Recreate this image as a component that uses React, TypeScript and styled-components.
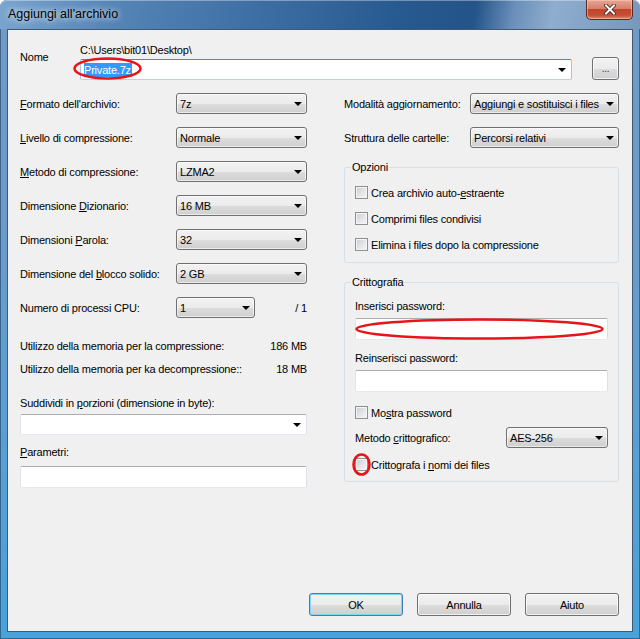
import React from 'react'
import styled, { createGlobalStyle } from 'styled-components'

const GlobalStyle = createGlobalStyle`
  html, body {
    margin: 0;
    padding: 0;
    background: #ffffff;
  }
  body {
    font-family: 'Liberation Sans', Arial, sans-serif;
    font-size: 11px;
    letter-spacing: -0.2px;
    color: #000;
  }
`

const Window = styled.div`
  width: 640px;
  height: 639px;
  box-sizing: border-box;
  display: flex;
  flex-direction: column;
  padding: 0 7px 7px 7px;
  border-radius: 7px 7px 0 0;
  background: linear-gradient(180deg, #6f9bc6 0%, #6a9bcb 35%, #55a0d4 80%, #48a3da 100%);
  box-shadow: inset 0 0 0 1px rgba(30, 55, 85, 0.55);
`

const TitleBar = styled.div`
  height: 29px;
  margin: 0 -7px;
  padding: 0 7px 0 8px;
  display: flex;
  align-items: flex-start;
  border-radius: 7px 7px 0 0;
  background: linear-gradient(100deg, #7aa5cf 0%, #5584b6 18%, #3e6fa4 40%, #275a90 62%, #245489 74%, #6a8fba 80%, #8fadcd 86%, #7797bc 100%);
  box-shadow: inset 0 1px 0 rgba(255, 255, 255, 0.35);
`

const Title = styled.div`
  font-size: 12.5px;
  letter-spacing: 0;
  line-height: 29px;
  color: #000;
  text-shadow: 0 0 6px rgba(255, 255, 255, 0.8), 0 0 10px rgba(255, 255, 255, 0.6);
`

const CloseButton = styled.div`
  margin-left: auto;
  width: 47px;
  height: 20px;
  box-sizing: border-box;
  border: 1px solid #5a2a22;
  border-top: none;
  border-radius: 0 0 5px 5px;
  background: linear-gradient(180deg, #e9a594 0%, #d5806a 45%, #c2452c 50%, #c74d33 80%, #dd8a6c 100%);
  box-shadow: inset 0 0 0 1px rgba(255, 210, 195, 0.5);
  display: flex;
  align-items: center;
  justify-content: center;
`

const Client = styled.div`
  flex: 1;
  display: flex;
  flex-direction: column;
  border: 1px solid #44586e;
  background: #f0f0f0;
  padding: 13px 13px 15px 12px;
`

const NameBlock = styled.div`
  display: grid;
  grid-template-columns: 60px 1fr;
`

const NameLabel = styled.div`
  grid-row: 1 / 3;
  line-height: 14px;
  margin-top: 7px;
`

const PathText = styled.div`
  line-height: 14px;
`

const NameRow = styled.div`
  display: flex;
  align-items: flex-end;
  gap: 20px;
`

const EditCombo = styled.div<{ $focused?: boolean; $width?: number }>`
  position: relative;
  flex: ${p => (p.$width ? 'none' : '1')};
  width: ${p => (p.$width ? `${p.$width}px` : 'auto')};
  height: 21px;
  box-sizing: border-box;
  display: flex;
  align-items: center;
  padding: 0 5px 0 3px;
  background: #fff;
  border: 1px solid;
  border-radius: 2px;
  border-color: ${p =>
    p.$focused ? '#5687b8 #a4c3e0 #b8d3ea #a4c3e0' : '#abadb3 #dbdfe6 #e3e9ef #e2e3ea'};
`

const Selected = styled.span`
  background: #3399ff;
  color: #fff;
  line-height: 14px;
  padding: 0 1px 0 0;
`

const Arrow = styled.span`
  margin-left: auto;
  width: 0;
  height: 0;
  border-left: 4px solid transparent;
  border-right: 4px solid transparent;
  border-top: 4px solid #000;
  flex: none;
`

const SmallButton = styled.div`
  width: 27px;
  height: 23px;
  box-sizing: border-box;
  border: 1px solid #707070;
  border-radius: 3px;
  background: linear-gradient(180deg, #f2f2f2 0%, #ebebeb 50%, #dddddd 51%, #cfcfcf 100%);
  box-shadow: inset 0 0 0 1px rgba(255, 255, 255, 0.7);
  display: flex;
  align-items: center;
  justify-content: center;
  font-size: 10px;
  padding-bottom: 1px;
  color: #333;
`

const Columns = styled.div`
  margin-top: 13px;
  display: grid;
  grid-template-columns: 287px 275px;
  column-gap: 37px;
  align-items: start;
`

const Column = styled.div`
  display: flex;
  flex-direction: column;
`

const SettingsList = styled.div`
  display: flex;
  flex-direction: column;
  gap: 13px;
`

const FieldRow = styled.div<{ $labelWidth: number }>`
  display: flex;
  align-items: center;
  height: 21px;

  & > label {
    width: ${p => p.$labelWidth}px;
    flex: none;
  }
`

const Select = styled.div<{ $width: number }>`
  width: ${p => p.$width}px;
  height: 21px;
  box-sizing: border-box;
  display: flex;
  align-items: center;
  padding: 0 4px 0 3px;
  border: 1px solid #707070;
  border-radius: 3px;
  background: linear-gradient(180deg, #f2f2f2 0%, #ebebeb 50%, #dddddd 51%, #cfcfcf 100%);
  box-shadow: inset 0 0 0 1px rgba(255, 255, 255, 0.6);
  white-space: nowrap;
  flex: none;
`

const CpuTotal = styled.span`
  margin-left: auto;
`

const InfoRow = styled.div<{ $gap: number }>`
  display: flex;
  justify-content: space-between;
  line-height: 14px;
  margin-top: ${p => p.$gap}px;
`

const TextLine = styled.div<{ $gap: number }>`
  line-height: 14px;
  margin-top: ${p => p.$gap}px;
`

const TextBox = styled.div<{ $gap: number; $height?: number }>`
  position: relative;
  margin-top: ${p => p.$gap}px;
  height: ${p => p.$height ?? 21}px;
  box-sizing: border-box;
  display: flex;
  align-items: center;
  padding: 0 5px 0 3px;
  background: #fff;
  border: 1px solid;
  border-radius: 2px;
  border-color: #abadb3 #dbdfe6 #e3e9ef #e2e3ea;
`

const Group = styled.fieldset<{ $gap: number; $padTop: number; $padBottom: number }>`
  margin: ${p => p.$gap}px 0 0 0;
  padding: ${p => p.$padTop}px 10px ${p => p.$padBottom}px 10px;
  border: 1px solid #d5dfe5;
  border-radius: 3px;
  min-width: 0;
  display: flex;
  flex-direction: column;
`

const Legend = styled.legend`
  margin-left: -4px;
  padding: 0 1px;
  line-height: 14px;
`

const CheckRow = styled.div<{ $gap?: number }>`
  display: flex;
  align-items: center;
  height: 13px;
  margin-top: ${p => p.$gap ?? 0}px;
`

const Box = styled.span`
  position: relative;
  width: 13px;
  height: 13px;
  box-sizing: border-box;
  border: 1px solid #8e8f8f;
  background: linear-gradient(135deg, #c9ccd1 0%, #e4e6e8 55%, #f4f4f4 100%);
  box-shadow: inset 0 0 0 1px #f4f4f4;
  flex: none;
`

const CheckText = styled.span`
  margin-left: 3px;
  line-height: 14px;
`

const MethodRow = styled.div`
  display: flex;
  align-items: center;
  justify-content: space-between;
  height: 21px;
  margin-top: 8px;
`

const Key = styled.span`
  text-decoration: underline;
`

const ButtonRow = styled.div`
  margin-top: auto;
  display: flex;
  justify-content: flex-end;
  gap: 14px;
`

const DialogButton = styled.div<{ $default?: boolean }>`
  width: 94px;
  height: 23px;
  box-sizing: border-box;
  display: flex;
  align-items: center;
  justify-content: center;
  border: 1px solid ${p => (p.$default ? '#3c7fb1' : '#707070')};
  border-radius: 3px;
  background: linear-gradient(180deg, #f2f2f2 0%, #ebebeb 50%, #dddddd 51%, #cfcfcf 100%);
  box-shadow: ${p =>
    p.$default ? 'inset 0 0 0 1px #7fd6f5' : 'inset 0 0 0 1px rgba(255, 255, 255, 0.7)'};
`

const Mark = styled.svg<{ $x: number; $y: number }>`
  position: absolute;
  left: ${p => p.$x}px;
  top: ${p => p.$y}px;
  overflow: visible;
  pointer-events: none;
`

function RedEllipse({ x, y, w, h }: { x: number; y: number; w: number; h: number }) {
  return (
    <Mark $x={x} $y={y} width={w} height={h}>
      <ellipse cx={w / 2} cy={h / 2} rx={w / 2 - 1.5} ry={h / 2 - 1.5} fill="none" stroke="#e8141c" strokeWidth="2.6" />
    </Mark>
  )
}

function Check({ children, gap, marked }: { children: React.ReactNode; gap?: number; marked?: boolean }) {
  return (
    <CheckRow $gap={gap}>
      <Box>{marked && <RedEllipse x={-4} y={-6} w={19} h={23} />}</Box>
      <CheckText>{children}</CheckText>
    </CheckRow>
  )
}

const settings: { label: React.ReactNode; value: string; width?: number }[] = [
  { label: <><Key>F</Key>ormato dell'archivio:</>, value: '7z' },
  { label: <><Key>L</Key>ivello di compressione:</>, value: 'Normale' },
  { label: <><Key>M</Key>etodo di compressione:</>, value: 'LZMA2' },
  { label: <>Dimensione <Key>D</Key>izionario:</>, value: '16 MB' },
  { label: <>Dimensioni <Key>P</Key>arola:</>, value: '32' },
  { label: <>Dimensione del <Key>b</Key>locco solido:</>, value: '2 GB' },
]

export default function App() {
  return (
    <>
      <GlobalStyle />
      <Window>
        <TitleBar>
          <Title>Aggiungi all'archivio</Title>
          <CloseButton>
            <svg width="12" height="11" viewBox="0 0 12 11">
              <path d="M2 1.5 L10 9.5 M10 1.5 L2 9.5" stroke="#3a1b15" strokeWidth="3.6" strokeLinecap="square" />
              <path d="M2 1.5 L10 9.5 M10 1.5 L2 9.5" stroke="#ffffff" strokeWidth="2" strokeLinecap="square" />
            </svg>
          </CloseButton>
        </TitleBar>

        <Client>
          <NameBlock>
            <NameLabel>Nome</NameLabel>
            <PathText>C:\Users\bit01\Desktop\</PathText>
            <NameRow>
              <EditCombo $focused>
                <Selected>Private.7z</Selected>
                <Arrow />
                <RedEllipse x={-8} y={-3} w={69} h={23} />
              </EditCombo>
              <SmallButton>...</SmallButton>
            </NameRow>
          </NameBlock>

          <Columns>
            <Column>
              <SettingsList>
                {settings.map((s, i) => (
                  <FieldRow key={i} $labelWidth={156}>
                    <label>{s.label}</label>
                    <Select $width={131}>
                      {s.value}
                      <Arrow />
                    </Select>
                  </FieldRow>
                ))}
                <FieldRow $labelWidth={156}>
                  <label>Numero di processi CPU:</label>
                  <Select $width={79}>
                    1
                    <Arrow />
                  </Select>
                  <CpuTotal>/ 1</CpuTotal>
                </FieldRow>
              </SettingsList>

              <InfoRow $gap={21}>
                <span>Utilizzo della memoria per la compressione:</span>
                <span>186 MB</span>
              </InfoRow>
              <InfoRow $gap={9}>
                <span>Utilizzo della memoria per ka decompressione::</span>
                <span>18 MB</span>
              </InfoRow>

              <TextLine $gap={20}>
                Suddividi in <Key>p</Key>orzioni (dimensione in byte):
              </TextLine>
              <TextBox $gap={4}>
                <Arrow />
              </TextBox>
              <TextLine $gap={10}>
                <Key>P</Key>arametri:
              </TextLine>
              <TextBox $gap={7} $height={22} />
            </Column>

            <Column>
              <SettingsList>
                <FieldRow $labelWidth={126}>
                  <label>Modalità a<Key>g</Key>giornamento:</label>
                  <Select $width={149}>
                    Aggiungi e sostituisci i files
                    <Arrow />
                  </Select>
                </FieldRow>
                <FieldRow $labelWidth={126}>
                  <label>Struttura delle cartelle:</label>
                  <Select $width={149}>
                    Percorsi relativi
                    <Arrow />
                  </Select>
                </FieldRow>
              </SettingsList>

              <Group $gap={12} $padTop={12} $padBottom={11}>
                <Legend>Opzioni</Legend>
                <Check>Crea archivio auto-<Key>e</Key>straente</Check>
                <Check gap={13}>Comprimi files condivisi</Check>
                <Check gap={13}>Elimina i files dopo la compressione</Check>
              </Group>

              <Group $gap={12} $padTop={10} $padBottom={10}>
                <Legend>Crittografia</Legend>
                <TextLine $gap={0}>Inserisci password:</TextLine>
                <TextBox $gap={5} $height={22}>
                  <RedEllipse x={-1} y={-1} w={249} h={22} />
                </TextBox>
                <TextLine $gap={11}>Reinserisci password:</TextLine>
                <TextBox $gap={5} $height={22} />
                <Check gap={14}>Mo<Key>s</Key>tra password</Check>
                <MethodRow>
                  <span>Metodo <Key>c</Key>rittografico:</span>
                  <Select $width={102}>
                    AES-256
                    <Arrow />
                  </Select>
                </MethodRow>
                <Check gap={10} marked>
                  Crittografa i <Key>n</Key>omi dei files
                </Check>
              </Group>
            </Column>
          </Columns>

          <ButtonRow>
            <DialogButton $default>OK</DialogButton>
            <DialogButton>Annulla</DialogButton>
            <DialogButton>Aiuto</DialogButton>
          </ButtonRow>
        </Client>
      </Window>
    </>
  )
}
